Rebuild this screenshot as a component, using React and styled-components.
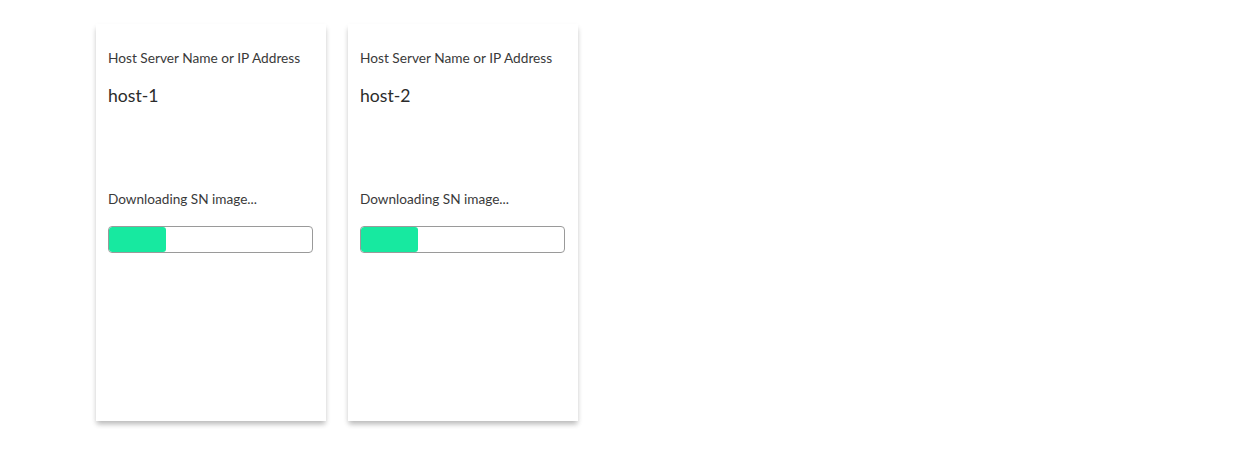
import React from "react";
import styled, { createGlobalStyle } from "styled-components";

const Global = createGlobalStyle`
  html, body { margin: 0; padding: 0; background: #fff; }
  body { font-family: Lato, "Open Sans", sans-serif; color: #333; }
`;

const Page = styled.div`
  display: flex;
  gap: 22px;
  padding: 24px 0 30px 96px;
`;

const Card = styled.div`
  width: 230px;
  height: 397px;
  box-sizing: border-box;
  background: #fff;
  padding: 26px 12px 0 12px;
  box-shadow: 0 4px 5px -1px rgba(0,0,0,0.22), 0 3px 6px 0 rgba(0,0,0,0.08);
  display: flex;
  flex-direction: column;
`;

const Label = styled.div`
  font-size: 13.7px;
  line-height: 16px;
  color: #3a3a3a;
`;

const Value = styled.div`
  margin-top: 20px;
  font-size: 17.6px;
  line-height: 20px;
  color: #2b2b2b;
`;

const Status = styled.div`
  margin-top: 85px;
  font-size: 13.6px;
  line-height: 16px;
  color: #3a3a3a;
`;

const Track = styled.div`
  margin-top: 19px;
  height: 27px;
  width: 205px;
  box-sizing: border-box;
  border: 1px solid #9a9a9a;
  border-radius: 4px;
  overflow: hidden;
`;

const Fill = styled.div`
  height: 100%;
  background: #17e9a0;
  border-radius: 3px;
`;

const hosts = [
  { name: "host-1", progress: 28 },
  { name: "host-2", progress: 28 },
];

export default function App() {
  return (
    <>
      <Global />
      <Page>
        {hosts.map((h) => (
          <Card key={h.name}>
            <Label>Host Server Name or IP Address</Label>
            <Value>{h.name}</Value>
            <Status>Downloading SN image...</Status>
            <Track>
              <Fill style={{ width: `${h.progress}%` }} />
            </Track>
          </Card>
        ))}
      </Page>
    </>
  );
}
